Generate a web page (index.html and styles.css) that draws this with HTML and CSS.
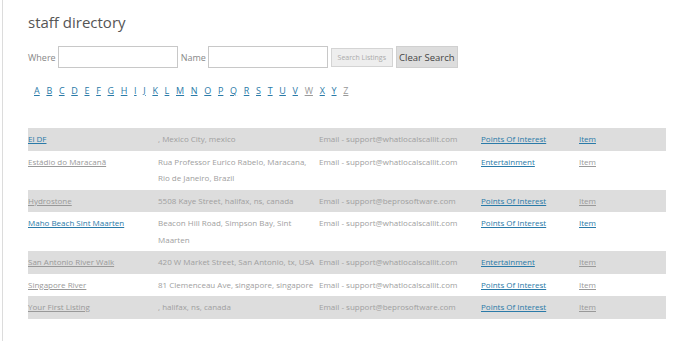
FILE: index.html
```html
<!DOCTYPE html>
<html>
<head>
<meta charset="utf-8">
<link rel="stylesheet" href="styles.css">
</head>
<body>
<div class="page">
  <h1 class="title">staff directory</h1>
  <form class="search">
    <label class="lbl">Where</label><input class="field" type="text">
    <label class="lbl">Name</label><input class="field" type="text">
    <button type="button" class="btn-search">Search Listings</button>
    <button type="button" class="btn-clear">Clear Search</button>
  </form>
  <div class="letters">
    <a href="#">A</a><a href="#">B</a><a href="#">C</a><a href="#">D</a><a href="#">E</a><a href="#">F</a><a href="#">G</a><a href="#">H</a><a href="#">I</a><a href="#">J</a><a href="#">K</a><a href="#">L</a><a href="#">M</a><a href="#">N</a><a href="#">O</a><a href="#">P</a><a href="#">Q</a><a href="#">R</a><a href="#">S</a><a href="#">T</a><a href="#">U</a><a href="#">V</a><a class="v" href="#">W</a><a href="#">X</a><a href="#">Y</a><a class="v" href="#">Z</a>
  </div>
  <table class="dir">
    <tr class="alt"><td class="c1"><a href="#">El DF</a></td><td class="c2">, Mexico City, mexico</td><td class="c3">Email - support@whatlocalscallit.com</td><td class="c4"><a href="#">Points Of Interest</a></td><td class="c5"><a href="#">Item</a></td></tr>
    <tr><td class="c1"><a class="v" href="#">Estádio do Maracanã</a></td><td class="c2">Rua Professor Eurico Rabelo, Maracana, Rio de Janeiro, Brazil</td><td class="c3">Email - support@whatlocalscallit.com</td><td class="c4"><a href="#">Entertainment</a></td><td class="c5"><a class="v" href="#">Item</a></td></tr>
    <tr class="alt"><td class="c1"><a class="v" href="#">Hydrostone</a></td><td class="c2">5508 Kaye Street, halifax, ns, canada</td><td class="c3">Email - support@beprosoftware.com</td><td class="c4"><a href="#">Points Of Interest</a></td><td class="c5"><a class="v" href="#">Item</a></td></tr>
    <tr><td class="c1"><a href="#">Maho Beach Sint Maarten</a></td><td class="c2">Beacon Hill Road, Simpson Bay, Sint Maarten</td><td class="c3">Email - support@whatlocalscallit.com</td><td class="c4"><a href="#">Points Of Interest</a></td><td class="c5"><a href="#">Item</a></td></tr>
    <tr class="alt"><td class="c1"><a class="v" href="#">San Antonio River Walk</a></td><td class="c2">420 W Market Street, San Antonio, tx, USA</td><td class="c3">Email - support@whatlocalscallit.com</td><td class="c4"><a href="#">Entertainment</a></td><td class="c5"><a class="v" href="#">Item</a></td></tr>
    <tr><td class="c1"><a class="v" href="#">Singapore River</a></td><td class="c2">81 Clemenceau Ave, singapore, singapore</td><td class="c3">Email - support@whatlocalscallit.com</td><td class="c4"><a href="#">Points Of Interest</a></td><td class="c5"><a class="v" href="#">Item</a></td></tr>
    <tr class="alt"><td class="c1"><a class="v" href="#">Your First Listing</a></td><td class="c2">, halifax, ns, canada</td><td class="c3">Email - support@beprosoftware.com</td><td class="c4"><a href="#">Points Of Interest</a></td><td class="c5"><a class="v" href="#">Item</a></td></tr>
  </table>
</div>
</body>
</html>
```
FILE: styles.css
```css
html, body { margin: 0; padding: 0; background: #fff; }
body { font-family: "Open Sans", "Noto Sans", sans-serif; color: #a0a0a0; }
.page {
  margin-left: 2px;
  border-left: 1px solid #dcdcdc;
  min-height: 341px;
  box-sizing: border-box;
  padding: 11px 28px 0 25px;
}
.title {
  margin: 0;
  font-size: 15px;
  font-weight: 400;
  color: #555;
  line-height: 22px;
}
.search {
  display: flex;
  align-items: center;
  margin-top: 13px;
  height: 22px;
}
.lbl { font-size: 9px; color: #888; margin-right: 2px; }
.field {
  width: 120px;
  height: 22px;
  box-sizing: border-box;
  border: 1px solid #c8c8c8;
  margin: 0 3px 0 0;
  padding: 0;
}
.btn-search {
  width: 62px;
  height: 19px;
  font-family: inherit;
  font-size: 7px;
  color: #aaa;
  background: #eee;
  border: 1px solid #d4d4d4;
  padding: 0;
  margin-right: 3px;
}
.btn-clear {
  width: 62px;
  height: 22px;
  font-family: inherit;
  font-size: 9.5px;
  color: #444;
  background: #ddd;
  border: 1px solid #d0d0d0;
  padding: 0;
}
.letters {
  margin-top: 16px;
  padding-left: 6px;
  display: flex;
  gap: 6.7px;
  font-size: 9px;
  line-height: 14px;
}
.letters a { color: #2a7aa8; text-decoration: underline; }
.letters a.v { color: #999; }
.dir {
  margin-top: 30px;
  width: 638px;
  border-collapse: collapse;
  font-size: 8px;
  color: #a0a0a0;
}
.dir td {
  padding: 3px 0;
  line-height: 16.5px;
  vertical-align: top;
  text-align: left;
}
.dir tr.alt td { background: #dddddd; }
.dir a { color: #2a7aa8; text-decoration: underline; }
.dir a.v { color: #999; }
.c1 { width: 130px; }
.c2 { width: 161px; padding-right: 1px !important; box-sizing: border-box; }
.c3 { width: 162px; }
.c4 { width: 98px; }
```
